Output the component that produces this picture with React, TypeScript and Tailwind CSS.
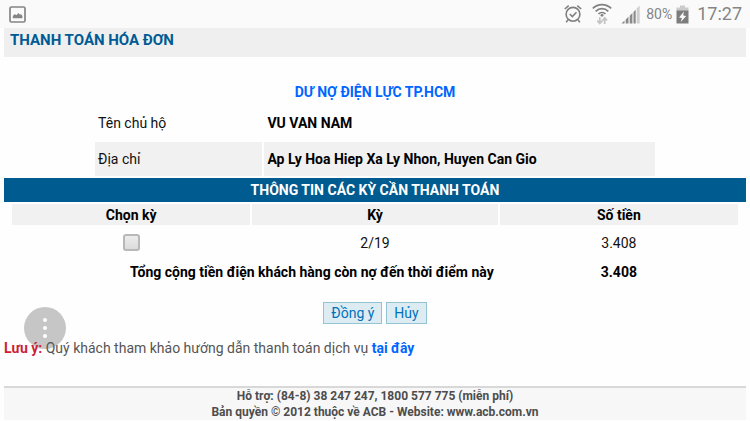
import { useState } from "react";

type Period = {
  id: string;
  label: string;
  amount: string;
};

const periods: Period[] = [{ id: "2-19", label: "2/19", amount: "3.408" }];

function ImageIcon() {
  return (
    <svg width="17" height="17" viewBox="0 0 17 17" fill="none">
      <rect x="1" y="1" width="15" height="15" rx="1.5" stroke="#858585" strokeWidth="1.7" />
      <path d="M3.8 12.200V10l2-2 1.500 1.200L9.400 7l1.600 1.800 1-.8 1.400 2v2.200z" fill="#858585" />
    </svg>
  );
}

function AlarmIcon() {
  return (
    <svg width="18" height="20" viewBox="0 0 18 20" fill="none" stroke="#808080" strokeWidth="1.6">
      <circle cx="9" cy="10.3" r="6.9" />
      <path d="M5.8 10l2.5 2.5 4.2-4.3" />
      <path d="M.8 5L4.7 1.6M17.2 5l-3.9-3.4M4 15.8L2.2 18.4M14 15.8l1.8 2.6" />
    </svg>
  );
}

function WifiIcon() {
  return (
    <svg width="20" height="22" viewBox="0 0 20 22" fill="none">
      <g stroke="#808080" strokeWidth="1.7">
        <path d="M.8 5.4C6 .3 14 .3 19.2 5.4" />
        <path d="M3.7 8.3c3.6-3.5 9-3.5 12.6 0" />
        <path d="M6.5 11c2-2 5-2 7 0" />
      </g>
      <circle cx="10" cy="12.3" r="1.4" fill="#808080" />
      <path
        d="M7.800 14.200v6M5.300 17.700l2.500 2.700 2.500-2.700M12.700 21v-6M10.400 17.500l2.300-2.600 2.300 2.600"
        stroke="#c4c4c4"
        strokeWidth="1.8"
      />
    </svg>
  );
}

function SignalIcon() {
  return (
    <svg width="19" height="19" viewBox="0 0 19 19">
      <path
        d="M.5 18.5l3-2.900v2.900zM4.700 18.500v-4l2.800-2.700v6.700zM8.700 18.500v-7.800L11.400 8v10.500zM12.500 18.500V7l2.200-2.200v13.700z"
        fill="#8a8a8a"
      />
      <path d="M15.700 18.500v-15l3-3v18z" fill="#cfcfcf" />
    </svg>
  );
}

function BatteryIcon() {
  return (
    <svg width="13" height="19" viewBox="0 0 13 19">
      <path d="M4 .5h5v2h3.500v4H.5v-4H4z" fill="#cbcbcb" />
      <path d="M.5 5.500h12v13H.5z" fill="#7d7d7d" />
      <path d="M8 6.500L3 12.400l2.900.5-1.100 4L10.200 11l-3-.5z" fill="#fafafa" />
    </svg>
  );
}

function StatusBar() {
  return (
    <div className="flex h-7 items-center justify-between bg-[#fafafa] pr-2 pl-[9px] text-[#858585]">
      <ImageIcon />
      <div className="flex items-center">
        <AlarmIcon />
        <span className="ml-[10px]">
          <WifiIcon />
        </span>
        <span className="ml-[9px]">
          <SignalIcon />
        </span>
        <span className="ml-[6px] text-sm">80%</span>
        <span className="ml-1">
          <BatteryIcon />
        </span>
        <span className="ml-2 text-lg">17:27</span>
      </div>
    </div>
  );
}

export default function App() {
  const [selected, setSelected] = useState<string[]>([]);

  const toggle = (id: string) => {
    setSelected((prev) =>
      prev.includes(id) ? prev.filter((p) => p !== id) : [...prev, id]
    );
  };

  return (
    <div className="min-h-screen bg-[#fefefe] font-[Roboto,sans-serif] text-sm text-[#111] [&_svg]:block">
      <StatusBar />

      <main className="mx-1">
        <h1 className="h-[29px] bg-[#efefef] px-[6px] text-[15px] leading-6 font-bold text-[#005b94]">
          THANH TOÁN HÓA ĐƠN
        </h1>

        <h2 className="mt-6 text-center leading-[22px] font-bold text-[#0066ff]">
          DƯ NỢ ĐIỆN LỰC TP.HCM
        </h2>

        {/* Customer */}
        <table className="mx-auto w-[76%] table-fixed border-separate border-spacing-[2px] text-left">
          <tbody>
            <tr className="h-[35px]">
              <th className="w-[30%] px-[3px] font-normal">Tên chủ hộ</th>
              <td className="px-[3px] font-bold text-black">VU VAN NAM</td>
            </tr>
            <tr className="h-[34px] bg-[#f1f1f1]">
              <th className="px-[3px] font-normal">Địa chỉ</th>
              <td className="px-[3px] font-bold text-black">
                Ap Ly Hoa Hiep Xa Ly Nhon, Huyen Can Gio
              </td>
            </tr>
          </tbody>
        </table>

        <h3 className="h-6 bg-[#005b90] text-center leading-6 font-bold text-white">
          THÔNG TIN CÁC KỲ CẦN THANH TOÁN
        </h3>

        {/* Billing periods */}
        <div className="px-[6px]">
          <table className="w-full table-fixed border-separate border-spacing-[2px] text-center">
            <thead>
              <tr className="h-[21px] bg-[#f1f1f1] leading-5 text-black">
                <th className="w-[33%]">Chọn kỳ</th>
                <th className="w-[34%]">Kỳ</th>
                <th className="w-[33%]">Số tiền</th>
              </tr>
            </thead>
            <tbody>
              {periods.map((p) => (
                <tr key={p.id} className="h-[31px]">
                  <td>
                    <input
                      type="checkbox"
                      aria-label={`Chọn kỳ ${p.label}`}
                      checked={selected.includes(p.id)}
                      onChange={() => toggle(p.id)}
                      className="mx-auto block size-[17px] appearance-none rounded-[3px] border-2 border-[#b8b8b8] bg-linear-to-b from-[#ececec] to-[#dcdcdc] checked:from-[#005b90] checked:to-[#005b90]"
                    />
                  </td>
                  <td>{p.label}</td>
                  <td>{p.amount}</td>
                </tr>
              ))}
              <tr className="h-6 font-bold text-black">
                <td colSpan={2} className="pr-1 text-right">
                  Tổng cộng tiền điện khách hàng còn nợ đến thời điểm này
                </td>
                <td>3.408</td>
              </tr>
            </tbody>
          </table>
        </div>

        <div className="mt-4 flex justify-center gap-1">
          <button
            type="button"
            className="h-[22px] border border-[#93c4d3] bg-[#dcecf2] px-[7px] leading-5 text-[#0072bc]"
          >
            Đồng ý
          </button>
          <button
            type="button"
            className="h-[22px] border border-[#93c4d3] bg-[#dcecf2] px-[7px] leading-5 text-[#0072bc]"
          >
            Hủy
          </button>
        </div>

        <div className="relative mt-3 leading-6 text-[#555]">
          <button
            type="button"
            aria-label="Menu"
            className="absolute bottom-[11px] left-5 flex size-[42px] flex-col items-center justify-center gap-1 rounded-full bg-[#c6c6c6]"
          >
            <span className="size-1 rounded-full bg-white" />
            <span className="size-1 rounded-full bg-white" />
            <span className="size-1 rounded-full bg-white" />
          </button>
          <p className="relative">
            <strong className="text-[#cc1f36]">Lưu ý:</strong> Quý khách tham khảo hướng dẫn thanh toán
            dịch vụ{" "}
            <a href="#huong-dan" className="font-bold text-[#0066ff]">
              tại đây
            </a>
          </p>
        </div>

        <footer className="mt-[26px] border-t-2 border-[#d8d8d8] bg-[#f7f7f7] text-center text-xs leading-4 font-bold text-[#4d4d4d]">
          <p>Hỗ trợ: (84-8) 38 247 247, 1800 577 775 (miễn phí)</p>
          <p>Bản quyền © 2012 thuộc về ACB - Website: www.acb.com.vn</p>
        </footer>
      </main>
    </div>
  );
}
